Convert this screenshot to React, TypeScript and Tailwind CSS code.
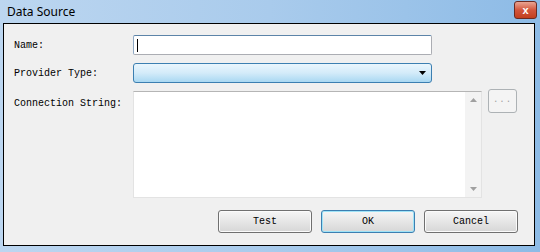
import { ChevronDown } from "lucide-react";

const mono = { fontFamily: '"Liberation Mono", "DejaVu Sans Mono", monospace' };

function Button({ label, focused }: { label: string; focused?: boolean }) {
    return (
        <button
            className={`h-[23px] w-[94px] rounded-[3px] border text-[10px] text-black bg-gradient-to-b from-[#f6f6f6] via-[#e6e6e6] to-[#d6d6d6] ${focused
                ? "border-[#3c7fb1] shadow-[inset_0_0_0_1px_#9fe3f7]"
                : "border-[#707070] shadow-[inset_0_0_0_1px_#fbfbfb]"
                }`}
            style={mono}
        >
            {label}
        </button>
    );
}

export default function App() {
    return (
        <div className="w-[540px] h-[252px] flex flex-col pl-[3px] pr-[5px] pb-[6px] bg-gradient-to-r from-[#bcd6f0] via-[#a9cbec] to-[#8dbbe6]">
            {/* title bar */}
            <div className="h-[23px] flex items-center justify-between pl-[4px]">
                <span className="text-[12px] text-black leading-none" style={{ fontFamily: '"Noto Sans", sans-serif' }}>
                    Data Source
                </span>
                <div className="w-[23px] h-[18px] -mt-[3px] mr-[-2px] rounded-[3px] border border-[#6b2a22] bg-gradient-to-b from-[#e8a493] via-[#d2553c] to-[#c23f1e] flex items-center justify-center">
                    <span className="text-white text-[11px] font-bold leading-none" style={{ fontFamily: '"Liberation Sans", sans-serif' }}>x</span>
                </div>
            </div>

            {/* client area */}
            <div className="flex-1 border border-black bg-[#f0f0f0] pl-[10px] pt-[11px] pr-[16px] flex flex-col text-[10px] text-black" style={mono}>
                <div className="flex items-center h-[20px]">
                    <span className="w-[119px]">Name:</span>
                    <div className="w-[299px] h-[20px] border border-[#abadb3] border-t-[#5c84a8] border-l-[#8fa9c4] rounded-[2px] bg-white flex items-center pl-[3px]">
                        <div className="w-[1px] h-[13px] bg-black" />
                    </div>
                </div>

                <div className="flex items-center h-[20px] mt-[8px]">
                    <span className="w-[119px]">Provider Type:</span>
                    <div className="w-[299px] h-[20px] border border-[#3c7fb1] rounded-[3px] bg-gradient-to-b from-[#eaf6fd] via-[#d3ebf9] to-[#a9d8f2] flex items-center justify-end pr-[5px]">
                        <svg width="7" height="4" viewBox="0 0 7 4">
                            <path d="M0 0 H7 L3.5 4 Z" fill="#000" />
                        </svg>
                    </div>
                </div>

                <div className="flex mt-[8px]">
                    <span className="w-[119px] pt-[5px]">Connection String:</span>
                    <div className="w-[349px] h-[107px] border border-[#e3e3e3] border-t-[#b5b5b5] bg-white flex justify-end">
                        <div className="w-[16px] h-full bg-[#f3f3f3] flex flex-col justify-between items-center py-[6px]">
                            <svg width="7" height="4" viewBox="0 0 7 4">
                                <path d="M0 4 H7 L3.5 0 Z" fill="#a0a0a0" />
                            </svg>
                            <svg width="7" height="4" viewBox="0 0 7 4">
                                <path d="M0 0 H7 L3.5 4 Z" fill="#a0a0a0" />
                            </svg>
                        </div>
                    </div>
                    <div className="ml-[6px] -mt-[2px] w-[29px] h-[24px] rounded-[3px] border border-[#adb2b5] bg-[#f4f4f4] flex items-center justify-center text-[#a0a0a0] text-[9px] tracking-[1px]">
                        ...
                    </div>
                </div>

                <div className="flex justify-end gap-[9px] mt-[12px]">
                    <Button label="Test" />
                    <Button label="OK" focused />
                    <Button label="Cancel" />
                </div>
            </div>
        </div>
    );
}
